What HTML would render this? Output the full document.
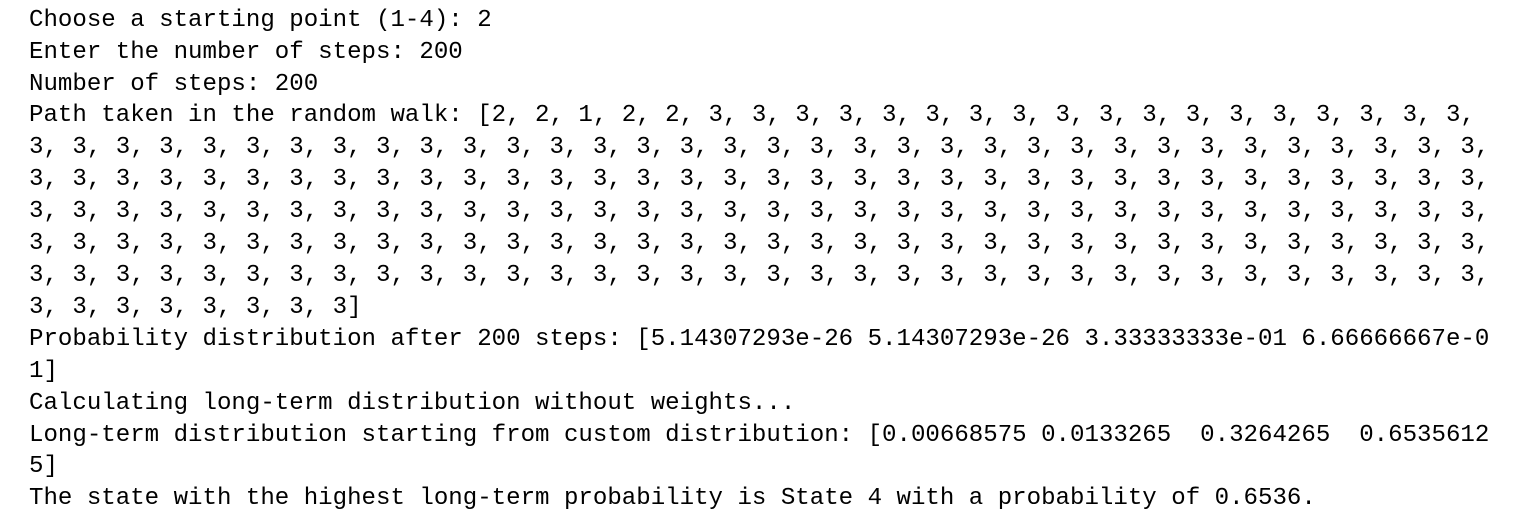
<!DOCTYPE html>
<html><head><meta charset="utf-8"><style>
html,body{margin:0;padding:0;background:#fff;width:1529px;height:522px;overflow:hidden}
pre{position:absolute;left:29px;top:-27.2px;margin:0;font-family:"Liberation Mono",monospace;font-size:24.1px;line-height:31.9px;color:#000}
</style></head><body><pre>Choosing starting point (q, p)
Choose a starting point (1-4): 2
Enter the number of steps: 200
Number of steps: 200
Path taken in the random walk: [2, 2, 1, 2, 2, 3, 3, 3, 3, 3, 3, 3, 3, 3, 3, 3, 3, 3, 3, 3, 3, 3, 3,
3, 3, 3, 3, 3, 3, 3, 3, 3, 3, 3, 3, 3, 3, 3, 3, 3, 3, 3, 3, 3, 3, 3, 3, 3, 3, 3, 3, 3, 3, 3, 3, 3, 3,
3, 3, 3, 3, 3, 3, 3, 3, 3, 3, 3, 3, 3, 3, 3, 3, 3, 3, 3, 3, 3, 3, 3, 3, 3, 3, 3, 3, 3, 3, 3, 3, 3, 3,
3, 3, 3, 3, 3, 3, 3, 3, 3, 3, 3, 3, 3, 3, 3, 3, 3, 3, 3, 3, 3, 3, 3, 3, 3, 3, 3, 3, 3, 3, 3, 3, 3, 3,
3, 3, 3, 3, 3, 3, 3, 3, 3, 3, 3, 3, 3, 3, 3, 3, 3, 3, 3, 3, 3, 3, 3, 3, 3, 3, 3, 3, 3, 3, 3, 3, 3, 3,
3, 3, 3, 3, 3, 3, 3, 3, 3, 3, 3, 3, 3, 3, 3, 3, 3, 3, 3, 3, 3, 3, 3, 3, 3, 3, 3, 3, 3, 3, 3, 3, 3, 3,
3, 3, 3, 3, 3, 3, 3, 3]
Probability distribution after 200 steps: [5.14307293e-26 5.14307293e-26 3.33333333e-01 6.66666667e-0
1]
Calculating long-term distribution without weights...
Long-term distribution starting from custom distribution: [0.00668575 0.0133265  0.3264265  0.6535612
5]
The state with the highest long-term probability is State 4 with a probability of 0.6536.</pre></body></html>
